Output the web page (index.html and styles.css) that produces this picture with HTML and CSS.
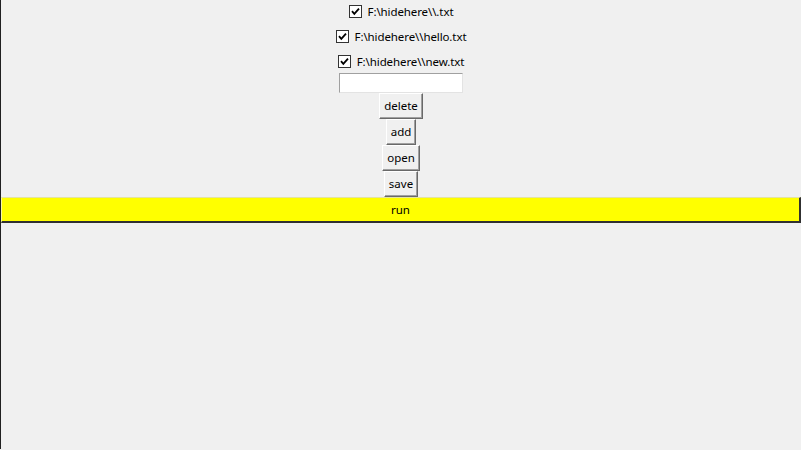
FILE: index.html
```html
<!DOCTYPE html>
<html>
<head>
<meta charset="utf-8">
<link rel="stylesheet" href="styles.css">
</head>
<body>
<div class="window">
  <div class="col">
    <label class="check"><span class="box"><svg width="11" height="11" viewBox="0 0 11 11"><path d="M2 5.2 L4.3 7.8 L9 2.6" fill="none" stroke="#000" stroke-width="1.8"/></svg></span><span class="lbl">F:\hidehere\\.txt</span></label>
    <label class="check"><span class="box"><svg width="11" height="11" viewBox="0 0 11 11"><path d="M2 5.2 L4.3 7.8 L9 2.6" fill="none" stroke="#000" stroke-width="1.8"/></svg></span><span class="lbl">F:\hidehere\\hello.txt</span></label>
    <label class="check"><span class="box"><svg width="11" height="11" viewBox="0 0 11 11"><path d="M2 5.2 L4.3 7.8 L9 2.6" fill="none" stroke="#000" stroke-width="1.8"/></svg></span><span class="lbl">F:\hidehere\\new.txt</span></label>
    <div class="entry"></div>
    <div class="btn">delete</div>
    <div class="btn">add</div>
    <div class="btn">open</div>
    <div class="btn">save</div>
  </div>
  <div class="run">run</div>
</div>
</body>
</html>
```
FILE: styles.css
```css
html, body {
  margin: 0;
  padding: 0;
  background: #f0f0f0;
}
body {
  width: 801px;
  height: 450px;
  overflow: hidden;
  font-family: "Noto Sans", "Segoe UI", sans-serif;
  font-size: 11.5px;
  color: #000;
}
.window {
  box-sizing: border-box;
  height: 450px;
  border-left: 1px solid #202020;
}
.col {
  display: flex;
  flex-direction: column;
  align-items: center;
  margin-top: -1px;
}
.check {
  height: 25px;
  display: flex;
  align-items: center;
  gap: 6px;
}
.box {
  box-sizing: border-box;
  width: 13px;
  height: 13px;
  border: 1px solid #333;
  background: #fff;
  display: flex;
  align-items: center;
  justify-content: center;
}
.box svg { display: block; }
.lbl { line-height: 16px; letter-spacing: -0.1px; }
.entry {
  box-sizing: border-box;
  width: 124px;
  height: 20px;
  background: #fff;
  border-top: 1px solid #a0a0a0;
  border-left: 1px solid #a0a0a0;
  border-right: 1px solid #e3e3e3;
  border-bottom: 1px solid #e3e3e3;
  margin-top: -1px;
}
.btn {
  box-sizing: border-box;
  height: 26px;
  padding: 0 4px 2px;
  display: flex;
  align-items: center;
  justify-content: center;
  background: #f0f0f0;
  border-top: 1px solid #fff;
  border-left: 1px solid #fff;
  border-right: 1px solid #696969;
  border-bottom: 1px solid #696969;
  box-shadow: inset -1px -1px 0 #a0a0a0;
}
.run {
  box-sizing: border-box;
  height: 26px;
  background: #ffff00;
  border-top: 1px solid #e3e3a0;
  border-left: 1px solid #f8f8a0;
  border-right: 2px solid #303030;
  border-bottom: 2px solid #303030;
  display: flex;
  align-items: center;
  justify-content: center;
}
```
